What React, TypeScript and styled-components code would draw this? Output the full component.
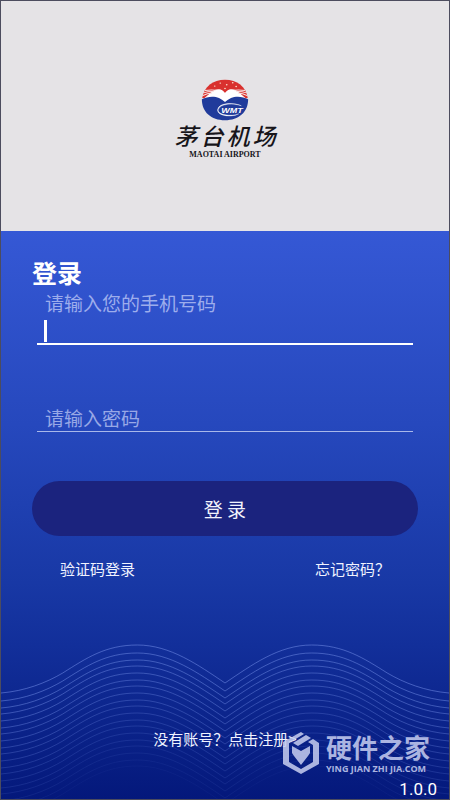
import React, { useState } from "react";
import styled, { createGlobalStyle } from "styled-components";

const cjk = '"Noto Sans CJK SC", sans-serif';

const GlobalStyle = createGlobalStyle`
  *, *::before, *::after { box-sizing: border-box; }
  body { margin: 0; font-family: ${cjk}; }
`;

const Page = styled.div`
  position: relative;
  display: flex;
  flex-direction: column;
  min-height: 100vh;
  border: 1px solid #4c4c5e;
`;

const Brand = styled.header`
  display: flex;
  flex-direction: column;
  align-items: center;
  height: 230px;
  padding-top: 78px;
  background: #e5e3e6;
  color: #17151a;
`;

const BrandName = styled.h1`
  display: flex;
  gap: 3px;
  margin: 0;
  font-size: 23px;
  line-height: 29px;
  font-weight: 500;
  font-style: italic;
`;

const BrandLatin = styled.p`
  margin: 0;
  font: 700 8px/10px "Liberation Serif", serif;
`;

const Panel = styled.main`
  position: relative;
  flex: 1;
  display: flex;
  flex-direction: column;
  padding: 26px 31px 0;
  color: #fff;
  background: linear-gradient(#3558d5 0%, #2648bd 34%, #1838a5 62%, #122f9a 73%, #04187b 100%);
`;

const WaveArt = styled.svg`
  position: absolute;
  left: 0;
  bottom: 0;
  width: 100%;
  height: 158px;
`;

const Form = styled.form`
  display: flex;
  flex-direction: column;
`;

const Title = styled.h2`
  margin: 0;
  font-size: 25px;
  line-height: 30px;
  font-weight: 700;
`;

const Field = styled.div<{ $active?: boolean }>`
  position: relative;
  display: flex;
  flex-direction: column;
  margin: 0 5px;
  padding: 0 8px;
  border-bottom: ${(p) => (p.$active ? "2px solid #fff" : "1px solid #a9b8ea")};
`;

const FieldLabel = styled.label`
  padding-top: 2px;
  font-size: 19px;
  line-height: 28px;
  font-weight: 400;
  color: #9dadec;
`;

const TextInput = styled.input`
  width: 100%;
  height: 26px;
  padding: 0;
  border: 0;
  outline: 0;
  background: transparent;
  color: #fff;
  font: 400 19px/26px ${cjk};
  &::placeholder { color: #98a8e6; opacity: 1; }
`;

const Caret = styled.span`
  position: absolute;
  left: 7px;
  bottom: 1px;
  width: 3px;
  height: 22px;
  background: #fff;
`;

const Spacer = styled.div`
  height: 60px;
`;

const Submit = styled.button`
  height: 55px;
  margin-top: 49px;
  border: 0;
  border-radius: 28px;
  background: #1b237e;
  color: #f2f3fc;
  font: 400 19px/28px ${cjk};
`;

const Links = styled.nav`
  position: relative;
  display: flex;
  justify-content: space-between;
  margin-top: 21px;
  padding: 0 28px;
`;

const TextLink = styled.a`
  color: #f0f3ff;
  font-size: 15px;
  line-height: 24px;
  text-decoration: none;
`;

const Footer = styled.footer`
  position: relative;
  display: flex;
  flex-direction: column;
  align-items: center;
  margin-top: auto;
`;

const Version = styled.span`
  align-self: flex-end;
  margin: 28px -19px 0 0;
  font: 400 17px/20px Roboto, sans-serif;
`;

const Watermark = styled.div`
  position: absolute;
  right: 19px;
  bottom: 24px;
  display: flex;
  align-items: center;
  gap: 6px;
  color: #c6cdf0;
  opacity: 0.86;
  pointer-events: none;
`;

const WatermarkText = styled.div`
  display: flex;
  flex-direction: column;
`;

const WatermarkName = styled.span`
  font-size: 26px;
  line-height: 32px;
  font-weight: 700;
`;

const WatermarkSite = styled.span`
  font: 700 9px/12px "Open Sans", sans-serif;
  white-space: nowrap;
`;

const waveOffsets = Array.from({ length: 19 }, (_, i) => (i === 0 ? 0 : 1 + i * 7 - Math.floor(i / 3)));

function Waves() {
  return (
    <WaveArt viewBox="0 0 450 158" preserveAspectRatio="none" aria-hidden="true">
      <g fill="none" stroke="#7c97ee">
        {waveOffsets.map((y, i) => (
          <path
            key={y}
            transform={`translate(0 ${y})`}
            strokeOpacity={0.5 - i * 0.025}
            d="M0 52C24 50 45 42 62 32C86 17 105 4 137 4C170 4 198 24 225 42C252 24 279 4 312 4C344 4 364 17 388 32C405 42 426 50 450 52"
          />
        ))}
      </g>
    </WaveArt>
  );
}

function Emblem() {
  return (
    <svg width="48" height="42" viewBox="106 28 112 124" preserveAspectRatio="none" aria-label="WMT" role="img">
      <path d="M109 84C113 50 134 30 162 30S211 50 215 84L162 92Z" fill="#d9312e" />
      <path d="M110 88C124 76 132 58 146 58C155 58 159 64 162 69C165 64 169 58 178 58C192 58 200 76 214 88L162 100Z" fill="#fff" />
      <g fill="none" stroke="#f8e4e4" strokeWidth="3">
        <path d="M115 62Q128 59 140 61M112 69Q124 64 136 65M110 77Q121 70 132 69" />
        <path d="M209 62Q196 59 184 61M212 69Q200 64 188 65M214 77Q203 70 192 69" />
      </g>
      <path d="M108 88C120 79 137 78 148 84Q157 90 162 96Q167 90 176 84C187 78 204 79 216 88C216 126 194 150 162 150S108 126 108 88Z" fill="#203b9b" />
      <g fill="#f9dcc8">
        <circle cx="138" cy="49" r="2" /><circle cx="151" cy="40" r="2" /><circle cx="166" cy="45" r="2" />
        <circle cx="180" cy="39" r="2" /><circle cx="188" cy="50" r="2" /><circle cx="162" cy="56" r="2" />
      </g>
      <path d="M200 107C184 99 151 99 146 119C144 134 178 140 194 131C175 143 141 136 145 117C149 97 184 97 200 107Z" fill="#fff" stroke="#fff" />
      <text x="153" y="127" fill="#fff" fontFamily="Liberation Sans" fontSize="21" fontStyle="italic" fontWeight="700">WMT</text>
    </svg>
  );
}

function ShieldMark() {
  return (
    <svg width="38" height="44" viewBox="0 0 38 44" fill="currentColor" aria-hidden="true">
      <path d="M19 1L22 3L7 12V31L19 38L31 31V14L26 11L31 8L37 12V33L19 43L1 33V11Z" />
      <path d="M24 4L29 7L16 15L11 12Z" />
      <path d="M10 15L19 20L28 15V22L26 25L19 34L12 25L10 22Z" />
    </svg>
  );
}

export default function App() {
  const [phone, setPhone] = useState("");
  const [password, setPassword] = useState("");
  return (
    <>
      <GlobalStyle />
      <Page>
        <Brand>
          <Emblem />
          <BrandName>
            {[..."茅台机场"].map((c) => <span key={c}>{c}</span>)}
          </BrandName>
          <BrandLatin>MAOTAI AIRPORT</BrandLatin>
        </Brand>
        <Panel>
          <Waves />
          <Form onSubmit={(e) => e.preventDefault()}>
            <Title>登录</Title>
            <Field $active>
              <FieldLabel htmlFor="phone">请输入您的手机号码</FieldLabel>
              <TextInput id="phone" type="tel" value={phone} onChange={(e) => setPhone(e.target.value)} />
              {phone === "" && <Caret />}
            </Field>
            <Spacer />
            <Field>
              <TextInput
                type="password"
                aria-label="请输入密码"
                placeholder="请输入密码"
                value={password}
                onChange={(e) => setPassword(e.target.value)}
              />
            </Field>
            <Submit type="submit">登 录</Submit>
          </Form>
          <Links>
            <TextLink href="#code">验证码登录</TextLink>
            <TextLink href="#forgot">忘记密码？</TextLink>
          </Links>
          <Footer>
            <TextLink href="#register">没有账号？点击注册&gt;</TextLink>
            <Version>1.0.0</Version>
          </Footer>
          <Watermark>
            <ShieldMark />
            <WatermarkText>
              <WatermarkName>硬件之家</WatermarkName>
              <WatermarkSite>YING JIAN ZHI JIA.COM</WatermarkSite>
            </WatermarkText>
          </Watermark>
        </Panel>
      </Page>
    </>
  );
}
